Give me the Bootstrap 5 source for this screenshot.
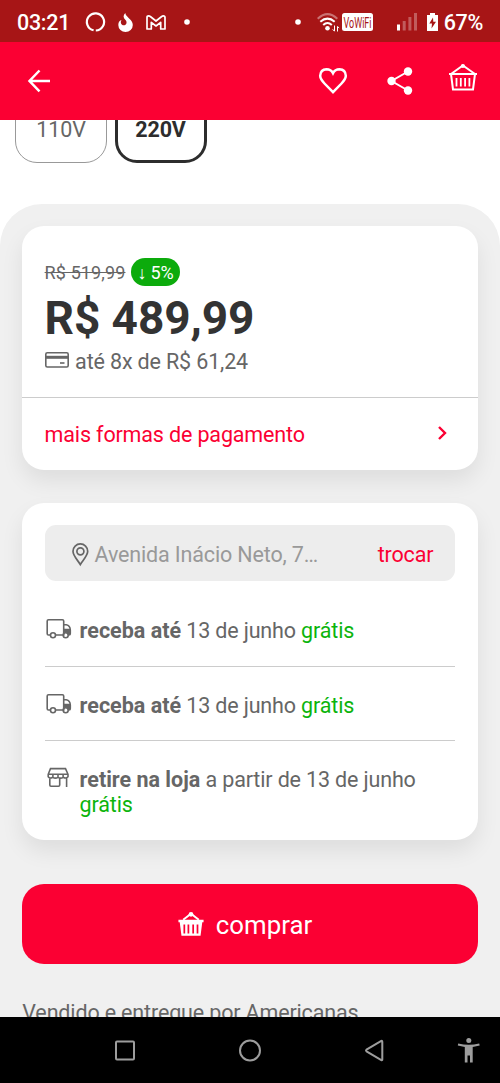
<!DOCTYPE html>
<html lang="pt-BR">
<head>
<meta charset="utf-8">
<meta name="viewport" content="width=device-width, initial-scale=1">
<title>Produto</title>
<link href="https://cdn.jsdelivr.net/npm/bootstrap@5.3.0/dist/css/bootstrap.min.css" rel="stylesheet">
<style>
body{font-family:Roboto,sans-serif;font-size:21.5px;letter-spacing:-.15px;line-height:25px;color:#666;background:#fff;height:1083px}
b{letter-spacing:0}
svg{display:block;flex:none;overflow:visible}
.statusbar{height:41.5px;background:#a71516;padding:3px 17px 0 17px;font-size:21.5px;letter-spacing:-.3px;font-weight:500;color:#fff}
.appbar{height:78px;background:#fb0033;padding:0 22px 0 27px}
.screen{height:897px}
.sysbar{height:66.5px;background:#000;color:#9d9d9d}
.volt{width:92px;height:80px;margin-top:-36.5px;border:1.4px solid #999;border-radius:22px;padding-top:33px;text-align:center;font-size:21.5px;color:#666}
.volt.active{border:3px solid #2d2d2d;color:#2d2d2d;font-weight:700;padding-top:31px}
.panel{margin-top:41px;height:820px;background:#f0f0f0;border-radius:42px 42px 0 0;padding:22px 22.3px 0}
.box{background:#fff;border:0;border-radius:22px;box-shadow:0 11px 22px rgba(0,0,0,.08)}
.box-pay{height:243.5px}
.price-area{height:171.5px;border-bottom:1.4px solid #ccc;padding:32px 22.3px 0}
.old{font-size:18px;letter-spacing:.12px}
.off{height:28px;width:49px;border-radius:14px;background:#0cab0c;color:#fff;font-size:18px;margin-left:5.500px}
.price{font-size:46px;line-height:50px;font-weight:700;color:#333;margin-top:6.500px;letter-spacing:-.1px}
.brand{color:#fb0033}
.free{color:#0cb40c}
.box-ship{height:337px;margin-top:33.5px;padding:22px 22.3px 0}
.address{height:56px;background:#ededed;border-radius:11px;padding:2px 22px 0 27px;color:#999}
.ship{height:74.6px;border-bottom:1.4px solid #ccc;padding:26px 0 0 1px}
.first-ship{margin-top:11px}
.ship:last-child{border:0}
.buy{height:80px;margin-top:44px;background:#fb0033!important;border:0;border-radius:22px;color:#fff!important;font-size:25.8px;gap:12px;padding:3px 22px 0 12px}
.seller{margin-top:35.500px}
</style>
</head>
<body class="overflow-hidden">
<svg width="0" height="0" class="position-absolute" aria-hidden="true">
<symbol id="basket" viewBox="0 0 30 30"><path d="M3 11 14.9 2.5 27 11M1 11h28M3 11l2 15.5h20L27 11" fill="none" stroke="currentColor" stroke-width="2"/><circle cx="14.9" cy="3" r="2.1" fill="currentColor"/><path d="M8.5 15v8.5M12.8 15v8.5M17.1 15v8.5M21.4 15v8.5" stroke="currentColor" stroke-width="1.8"/></symbol>
<symbol id="truck" viewBox="0 0 26 22"><g fill="none" stroke="currentColor" stroke-width="1.6"><path d="M4 17H2.5Q1.2 17 1.2 15.700V3Q1.200 1.700 2.500 1.700H16.400Q17.700 1.700 17.700 3V17H9.500M17.700 6.800H20.300Q24.200 7.500 24.300 12V15.600Q24.300 17 23 17H22.500"/><circle cx="7" cy="17.300" r="2.500"/><circle cx="19.700" cy="17.300" r="2.500"/></g><path d="M17.700 10.800h6.300l.3 6.200h-2.100a2.600 2.600 0 0 0-4.500-1.700z" fill="currentColor"/></symbol>
</svg>

<header>
<div class="statusbar d-flex align-items-center">
<span>03:21</span>
<svg width="20" height="20" viewBox="0 0 20 20" style="margin-left:15px"><path d="M8.600 18.300A8.600 8.600 0 1 1 10.800 18.500" fill="none" stroke="#fff" stroke-width="2.200"/></svg>
<svg width="15" height="19" viewBox="0 0 15 19" style="margin-left:13px"><path d="M7.300 0C7.500 4 14.800 6.500 14.800 12A7.200 7 0 0 1 .3 12C.3 9 1.800 7.500 3.500 7C2 9.300 3.200 12.300 5.700 12.300C8.500 12.300 9.500 9 7.500 7C5 4.600 5 2.500 7.300 0Z" fill="#fff"/></svg>
<svg width="20" height="15" viewBox="0 0 20 15" style="margin-left:13px"><path d="M1 2.500Q1 .8 2.700.8Q3.500.8 4.300 1.500L10 6L15.700 1.500Q16.500.8 17.300.8Q19 .8 19 2.500V14H14.700V7.300L10 11L5.300 7.300V14H1Z" fill="none" stroke="#fff" stroke-width="1.700" stroke-linejoin="round"/></svg>
<svg width="6" height="6" viewBox="0 0 6 6" style="margin-left:17.500px"><circle cx="3" cy="3" r="2.800" fill="#fff"/></svg>
<svg class="ms-auto" width="6" height="6" viewBox="0 0 6 6"><circle cx="3" cy="3" r="2.800" fill="#fff"/></svg>
<svg width="22" height="19" viewBox="0 0 22 19" style="margin-left:16px"><g fill="none" stroke="#fff" stroke-width="2"><path d="M.7 5.800Q10.500-3.500 20.300 5.800" opacity=".4"/><path d="M3.300 8.800Q10.500 2.500 17.700 8.800M6.200 12Q10.500 8 14.800 12"/></g><circle cx="10.500" cy="15.300" r="2.300" fill="#fff"/><path d="M17.500 12.500V18M15.700 16.300l1.800 2M20.500 18.500V13.500l1.700 1.500" fill="none" stroke="#fff"/></svg>
<svg width="31" height="18" viewBox="0 0 31 18" style="margin-left:2.500px"><rect width="31" height="18" rx="2.500" fill="#fff"/><text x="1.500" y="14.700" font-family="Roboto" font-size="14.500" font-weight="400" letter-spacing="0" fill="#a71516" textLength="28" lengthAdjust="spacingAndGlyphs">VoWiFi</text></svg>
<svg width="20" height="18" viewBox="0 0 20 18" style="margin-left:24px"><rect y="11.500" width="3" height="6" fill="#fff"/><g fill="#fff" opacity=".3"><rect x="5.700" y="8" width="3" height="9.500"/><rect x="11.400" y="4" width="3" height="13.500"/><rect x="17" width="3" height="17.500"/></g></svg>
<svg width="11" height="18" viewBox="0 0 11 18" style="margin-left:10.500px"><path d="M0 2H3V0H8V2H11V18H0Z" fill="#fff"/><path d="M6 4.500 2.300 10.500H5L4.500 15.500 9 8.800H6.300Z" fill="#a71516"/></svg>
<span style="margin-left:5.500px">67%</span>
</div>
<div class="appbar d-flex align-items-center">
<svg width="24" height="24" viewBox="0 0 24 24"><path d="M12.500 1.500 2.500 12 12.500 22.300M2.500 12H23" fill="none" stroke="#fff" stroke-width="2.500"/></svg>
<svg class="ms-auto" width="28" height="26" viewBox="0 0 28 26"><path d="M14 24.200 5.500 15.500Q1.200 11 1.200 7.800Q1.500 1.500 7.500 1.300Q12 1.300 14 5.200Q16 1.300 20.500 1.300Q26.500 1.500 26.800 7.800Q26.800 11 22.500 15.500Z" fill="none" stroke="#fff" stroke-width="2.500"/></svg>
<svg width="26" height="28" viewBox="0 0 26 28" style="margin-left:40px"><path d="M21 4.500 4.500 14 21 23.500" fill="none" stroke="#fff" stroke-width="2"/><g fill="#fff"><circle cx="21" cy="4.500" r="4.200"/><circle cx="4.500" cy="14" r="4.200"/><circle cx="21" cy="23.500" r="4.200"/></g></svg>
<svg width="30" height="30" class="text-white" style="margin:-5px 0 0 35px"><use href="#basket"/></svg>
</div>
</header>

<main class="screen overflow-hidden">
<div class="d-flex" style="padding-left:15px;gap:7.500px">
<div class="volt">110V</div><div class="volt active">220V</div>
</div>
<section class="panel">
<div class="box box-pay card">
<div class="price-area">
<div class="d-flex align-items-center"><s class="old">R$ 519,99</s><span class="off d-flex align-items-center justify-content-center">↓ 5%</span></div>
<div class="price">R$ 489,99</div>
<div class="d-flex align-items-center" style="margin-top:6px;gap:6.500px"><svg width="24" height="16" viewBox="0 0 24 16" style="margin-top:-2px"><rect x=".8" y=".8" width="22.400" height="14.200" rx="1.500" fill="none" stroke="#666" stroke-width="1.600"/><path d="M1 5.300H23" stroke="#666" stroke-width="3"/><path d="M15 11h4.500" stroke="#666" stroke-width="1.600"/></svg><span>até 8x de R$ 61,24</span></div>
</div>
<a class="brand d-flex align-items-center justify-content-between flex-grow-1 text-decoration-none" style="padding:1px 31px 0 22.300px"><span>mais formas de pagamento</span><svg width="9" height="14" viewBox="0 0 9 14" style="margin-top:-2px"><path d="M1 1 7 7 1 13" fill="none" stroke="currentColor" stroke-width="2.400"/></svg></a>
</div>

<div class="box box-ship card">
<div class="address d-flex align-items-center"><svg width="17" height="23" viewBox="0 0 17 23"><path d="M8.300 21.500C6 17.500 1 13 1 8.300A7.300 7.300 0 0 1 15.700 8.300C15.700 13 10.500 17.500 8.300 21.500Z" fill="none" stroke="#666" stroke-width="1.700"/><circle cx="8.400" cy="8.300" r="3.500" fill="none" stroke="#666" stroke-width="1.700"/></svg><span style="margin-left:6px">Avenida Inácio Neto, 7…</span><span class="brand ms-auto">trocar</span></div>
<div class="ship first-ship d-flex"><svg width="26" height="22" style="margin-right:8px"><use href="#truck"/></svg><div><b>receba até</b> 13 de junho <span class="free">grátis</span></div></div>
<div class="ship d-flex"><svg width="26" height="22" style="margin-right:8px"><use href="#truck"/></svg><div><b>receba até</b> 13 de junho <span class="free">grátis</span></div></div>
<div class="ship d-flex"><svg width="26" height="22" viewBox="0 0 26 22" style="margin-right:8px"><g fill="none" stroke="#666" stroke-width="1.600"><path d="M4.500 1.600H19.500L22 7.300V9.700Q20 12 17.200 10.300Q14.600 12 12 10.300Q9.400 12 6.800 10.300Q4 12 2.200 9.700V7.300ZM2.200 7.300H22M6.900 7.300V10.500M12 7.300V10.500M17.100 7.300V10.500M3.800 11V18Q3.800 19.200 5 19.200H12.500Q13.700 19.200 13.700 18V11.500M20.600 11V20"/></g></svg><div><b>retire na loja</b> a partir de 13 de junho<br><span class="free">grátis</span></div></div>
</div>

<button class="btn buy w-100 d-flex align-items-center justify-content-center"><svg width="26" height="27" viewBox="0 0 30 30" style="margin-top:-2px"><path d="M6 9.500 15 2.500 24 9.500" fill="none" stroke="#fff" stroke-width="2.200"/><circle cx="15" cy="3.300" r="2.700" fill="#fff"/><path fill="#fff" fill-rule="evenodd" d="M.5 9.500h29v3H28L26 28H4L2 12.500H.5ZM6.300 15v10.500h2V15ZM11 15v10.500h2V15ZM16.500 15v10.500h2V15ZM21.500 15v10.500h2V15Z"/></svg><span>comprar</span></button>
<div class="seller">Vendido e entregue por Americanas</div>
</section>
</main>

<nav class="sysbar position-fixed bottom-0 w-100">
<svg width="500" height="66" viewBox="0 0 500 66" fill="none" stroke="#9d9d9d" stroke-width="2"><rect x="116" y="24.500" width="18" height="18" rx="1"/><circle cx="250" cy="33.500" r="10"/><path d="M382.300 25V42.500Q382.300 43.500 381.300 43L366.500 34.300Q365.500 33.500 366.500 32.700L381.300 24Q382.300 23.500 382.300 25Z"/><g fill="#9d9d9d" stroke="none"><circle cx="468.800" cy="23.500" r="2.500"/><path d="M458.200 26.500Q468.800 29 479.200 26.500L479.700 28.600L472.700 30V45.500H470V38.500H467.500V45.500H464.800V30L457.800 28.600Z"/></g></svg>
</nav>
<script src="https://cdn.jsdelivr.net/npm/bootstrap@5.3.0/dist/js/bootstrap.bundle.min.js"></script>
</body>
</html>
